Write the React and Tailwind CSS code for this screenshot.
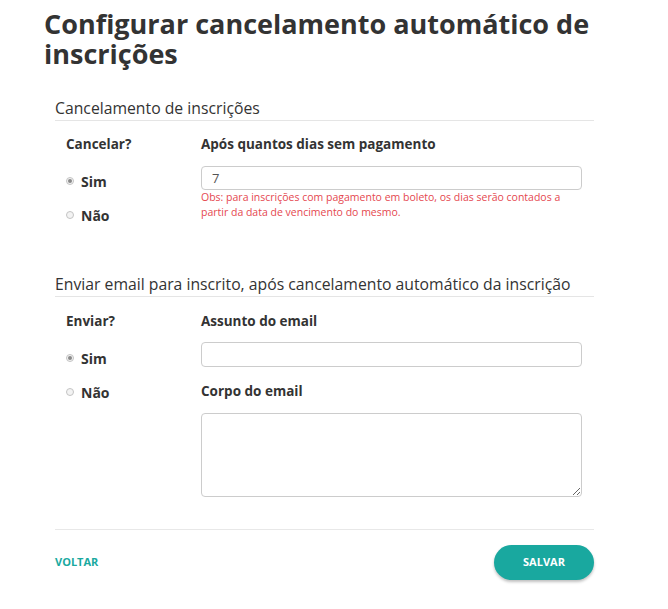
function Radio({ checked, label, className = "" }) {
  return (
    <label className={`flex items-center h-[20px] ${className}`}>
      <span className="w-[8px] h-[8px] rounded-full border border-[#c4c4c4] bg-[#f3f3f3] flex items-center justify-center">
        {checked && <span className="w-[4px] h-[4px] rounded-full bg-[#8a8a8a]" />}
      </span>
      <span className="ml-[7px] text-[14px] font-bold text-[#333]">{label}</span>
    </label>
  );
}

export default function App() {
  return (
    <div
      className="min-h-screen bg-white pl-[44px] pt-[9px] text-[#333]"
      style={{ fontFamily: '"Open Sans", sans-serif' }}
    >
      <h1 className="w-[570px] text-[27px] leading-[30px] font-bold text-[#333]">
        Configurar cancelamento automático de inscrições
      </h1>

      <div className="ml-[11px] w-[539px]">
        {/* cancelamento */}
        <h2 className="mt-[28px] text-[15.75px] leading-[22px] pb-[1px] border-b border-[#e5e5e5] text-[#333]">
          Cancelamento de inscrições
        </h2>
        <div className="flex mt-[13px]">
          <div className="w-[146px] pl-[11px]">
            <div className="text-[13.5px] leading-[20px] font-bold">Cancelar?</div>
            <Radio checked label="Sim" className="mt-[17px]" />
            <Radio label="Não" className="mt-[14px]" />
          </div>
          <div className="w-[381px]">
            <div className="text-[13.5px] leading-[20px] font-bold">Após quantos dias sem pagamento</div>
            <input
              defaultValue="7"
              className="mt-[12px] w-full h-[24px] rounded-[4px] border border-[#ccc] px-[10px] text-[13px] text-[#555] outline-none"
            />
            <p className="text-[10.5px] leading-[15px] text-[#e5474f]">
              Obs: para inscrições com pagamento em boleto, os dias serão contados a partir da data de vencimento do mesmo.
            </p>
          </div>
        </div>

        {/* email */}
        <h2 className="mt-[48px] text-[15.75px] leading-[22px] pb-[1px] border-b border-[#e5e5e5] text-[#333]">
          Enviar email para inscrito, após cancelamento automático da inscrição
        </h2>
        <div className="flex mt-[14px]">
          <div className="w-[146px] pl-[11px]">
            <div className="text-[13.5px] leading-[20px] font-bold">Enviar?</div>
            <Radio checked label="Sim" className="mt-[17px]" />
            <Radio label="Não" className="mt-[14px]" />
          </div>
          <div className="w-[381px]">
            <div className="text-[13.5px] leading-[20px] font-bold">Assunto do email</div>
            <input className="mt-[11px] w-full h-[25px] rounded-[4px] border border-[#ccc] px-[10px] text-[13px] text-[#555] outline-none" />
            <div className="mt-[14px] text-[13.5px] leading-[20px] font-bold">Corpo do email</div>
            <textarea className="block mt-[12px] w-full h-[84px] rounded-[4px] border border-[#ccc] px-[10px] text-[13px] text-[#555] outline-none" />
          </div>
        </div>

        <div className="mt-[32px] border-t border-[#e8e8e8]" />

        <div className="mt-[15px] flex items-center justify-between">
          <button className="text-[11px] font-bold text-[#1aa9a0]">VOLTAR</button>
          <button className="w-[100px] h-[35px] rounded-full bg-[#19a89f] text-white text-[11px] font-bold shadow-[0_2px_3px_rgba(0,0,0,0.25)]">
            SALVAR
          </button>
        </div>
      </div>
    </div>
  );
}
